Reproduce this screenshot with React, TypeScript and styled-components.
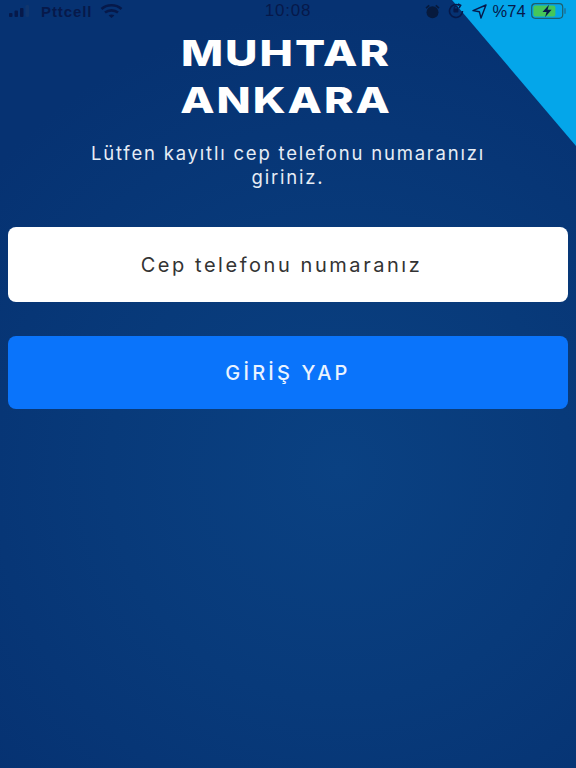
import React from "react";
import styled, { createGlobalStyle } from "styled-components";

const GlobalStyle = createGlobalStyle`
  html, body {
    margin: 0;
    padding: 0;
    background: #063272;
  }
`;

const Screen = styled.div`
  position: relative;
  width: 576px;
  height: 768px;
  overflow: hidden;
  box-sizing: border-box;
  padding: 0 8px;
  background: radial-gradient(ellipse 460px 460px at 340px 470px, #0a4182 0%, #083a7a 50%, #063272 100%);
  font-family: Inter, "Liberation Sans", sans-serif;
`;

const Corner = styled.div`
  position: absolute;
  top: 0;
  right: 0;
  width: 124px;
  height: 146px;
  background: #04a6ea;
  clip-path: polygon(0 0, 100% 0, 100% 100%);
`;

const StatusBar = styled.div`
  position: relative;
  display: grid;
  grid-template-columns: 1fr auto 1fr;
  align-items: center;
  height: 22px;
  margin: 0 -8px 2px;
  padding: 0 9px;
  color: #06194a;
  font-family: "Liberation Sans", sans-serif;
  font-size: 15px;
`;

const StatusLeft = styled.div`
  display: flex;
  align-items: center;
  gap: 8px;
`;

const StatusRight = styled.div`
  display: flex;
  align-items: center;
  justify-content: flex-end;
  gap: 8px;
`;

const Carrier = styled.span`
  font-weight: 700;
  letter-spacing: 0.9px;
`;

const Clock = styled.span`
  font-size: 17px;
  letter-spacing: 0.8px;
`;

const Percent = styled.span`
  font-size: 16.5px;
  margin: 0 -3px;
  letter-spacing: 0.2px;
`;

const Content = styled.main`
  position: relative;
  display: flex;
  flex-direction: column;
  align-items: stretch;
`;

const Title = styled.h1`
  margin: 6px 0 0;
  text-align: center;
  color: #fff;
  font-size: 36px;
  line-height: 47px;
  font-weight: 800;
  letter-spacing: 1.6px;
  transform: translateX(-2px) scaleX(1.24);
`;

const Subtitle = styled.p`
  margin: 17px auto 0;
  width: 410px;
  text-align: center;
  color: #e6edf5;
  font-size: 18.5px;
  line-height: 24px;
  letter-spacing: 1.8px;
`;

const PhoneField = styled.div`
  display: flex;
  align-items: center;
  justify-content: center;
  height: 75px;
  margin-top: 38px;
  padding-right: 13px;
  border-radius: 8px;
  background: #fff;
  color: #333;
  font-size: 20px;
  letter-spacing: 2.55px;
`;

const LoginButton = styled.button`
  height: 73px;
  margin-top: 34px;
  border: 0;
  border-radius: 8px;
  background: #0a74fb;
  color: #eaf3ff;
  font-family: inherit;
  font-size: 20px;
  font-weight: 500;
  letter-spacing: 3.2px;
`;

function Signal() {
  return (
    <svg width="24" height="12" viewBox="0 0 24 12">
      <rect x="0" y="8" width="3.5" height="4" rx="1" fill="#06194a" />
      <rect x="5.5" y="5.5" width="3.5" height="6.5" rx="1" fill="#06194a" />
      <rect x="11" y="3" width="3.5" height="9" rx="1" fill="#06194a" />
      <rect x="16.5" y="0" width="3.5" height="12" rx="1" fill="#10366f" />
    </svg>
  );
}

function Wifi() {
  return (
    <svg width="23" height="16" viewBox="0 0 23 16" fill="none" stroke="#06194a" strokeWidth="2.6">
      <path d="M1.5 6 C7 1 16 1 21.5 6" />
      <path d="M5 9.6 C8.6 6.6 14.4 6.6 18 9.6" />
      <path d="M11.5 15 L8.6 12.4 C10.2 11.2 12.8 11.2 14.4 12.4 Z" fill="#06194a" stroke="none" />
    </svg>
  );
}

function Alarm() {
  return (
    <svg width="15" height="15" viewBox="0 0 15 15" fill="#071a3d">
      <circle cx="7.5" cy="8.2" r="6" />
      <path d="M0.5 3.6 L3.6 0.8 L4.8 2 L1.6 4.8 Z" />
      <path d="M14.5 3.6 L11.4 0.8 L10.2 2 L13.4 4.8 Z" />
    </svg>
  );
}

function Rotation() {
  return (
    <svg width="16" height="16" viewBox="0 0 16 16" fill="none" stroke="#06194a" strokeWidth="1.6">
      <path d="M14.5 8 A6.5 6.5 0 1 1 11 2.2" />
      <path d="M10 1 L12.6 2.4 L11 5" />
      <rect x="5.4" y="5.6" width="5" height="4" rx="1" fill="#06194a" stroke="none" />
      <path d="M6.2 5.8 V4.8 A1.7 1.7 0 0 1 9.6 4.8 V5.8" strokeWidth="1" />
    </svg>
  );
}

function LocationArrow() {
  return (
    <svg width="15" height="15" viewBox="0 0 15 15" fill="none" stroke="#06194a" strokeWidth="1.4" strokeLinejoin="round">
      <path d="M14 1 L1 6.6 L7.4 7.8 L9 14 Z" />
    </svg>
  );
}

function Battery() {
  return (
    <svg width="36" height="16" viewBox="0 0 36 16">
      <rect x="0.7" y="0.7" width="31" height="14.6" rx="3.5" fill="none" stroke="#1d5f6e" strokeWidth="1.2" />
      <rect x="2.4" y="2.4" width="22" height="11.2" rx="2" fill="#45c65a" />
      <rect x="33" y="5" width="2" height="6" rx="1" fill="#167fb0" />
      <path d="M18 1.8 L11.5 9 H15.6 L14 14.2 L20.6 6.8 H16.5 Z" fill="#06194a" />
    </svg>
  );
}

export default function App() {
  return (
    <Screen>
      <GlobalStyle />
      <Corner />
      <StatusBar>
        <StatusLeft>
          <Signal />
          <Carrier>Pttcell</Carrier>
          <Wifi />
        </StatusLeft>
        <Clock>10:08</Clock>
        <StatusRight>
          <Alarm />
          <Rotation />
          <LocationArrow />
          <Percent>%74</Percent>
          <Battery />
        </StatusRight>
      </StatusBar>
      <Content>
        <Title>
          MUHTAR
          <br />
          ANKARA
        </Title>
        <Subtitle>Lütfen kayıtlı cep telefonu numaranızı giriniz.</Subtitle>
        <PhoneField>Cep telefonu numaranız</PhoneField>
        <LoginButton>GİRİŞ YAP</LoginButton>
      </Content>
    </Screen>
  );
}
